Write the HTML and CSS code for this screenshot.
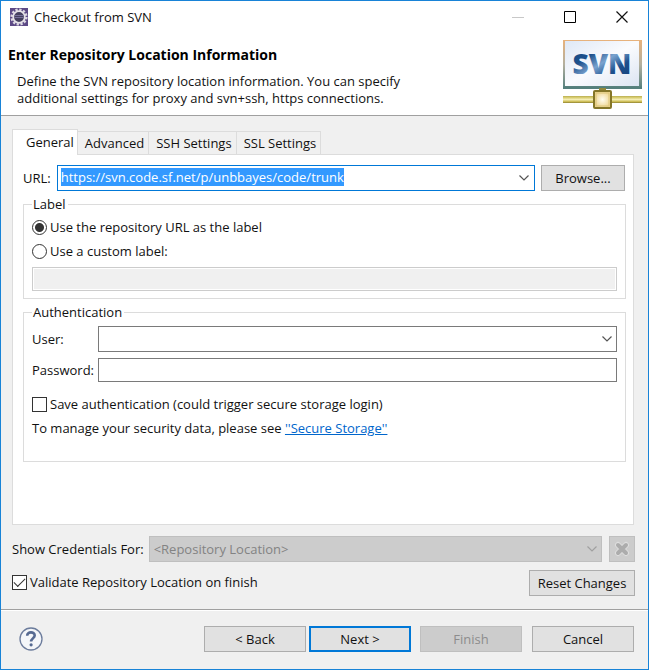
FILE: index.html
```html
<!DOCTYPE html>
<html lang="en">
<head>
<meta charset="utf-8">
<title>Checkout from SVN</title>
<link rel="stylesheet" href="styles.css">
</head>
<body>
<form class="window">
  <header class="titlebar">
    <svg class="app-icon" viewBox="0 0 18 18" aria-hidden="true">
      <rect width="18" height="18" fill="#5d4a86"/>
      <circle cx="9" cy="9" r="7.4" fill="none" stroke="#ddd9e2" stroke-width="2.400" stroke-dasharray="2.300 1.575"/>
      <circle cx="9" cy="9" r="5.800" fill="#45405f" stroke="#e6e2e8" stroke-width="1.800"/>
      <path d="M4.500 7.500h9M4.500 9.500h9" stroke="#77709a"/>
    </svg>
    <span class="titlebar-text">Checkout from SVN</span>
    <button type="button" class="caption" aria-label="Minimize" disabled><svg viewBox="0 0 12 12"><path d="M0 6.500h12" stroke="#c8c8c8"/></svg></button>
    <button type="button" class="caption" aria-label="Maximize"><svg viewBox="0 0 12 12"><path d="M.5.5h11v11H.5z" fill="none" stroke="#000"/></svg></button>
    <button type="button" class="caption" aria-label="Close"><svg viewBox="0 0 12 12"><path d="M.5.5l11 11M11.500.5l-11 11" stroke="#111" stroke-width="1.200"/></svg></button>
  </header>

  <section class="banner">
    <div class="banner-text">
      <h1>Enter Repository Location Information</h1>
      <p>Define the SVN repository location information. You can specify additional settings for proxy and svn+ssh, https connections.</p>
    </div>
    <svg class="banner-logo" viewBox="0 0 80 70" role="img" aria-label="SVN">
      <defs>
        <linearGradient id="frame" x1="0" y1="0" x2="0" y2="1"><stop offset="0" stop-color="#e8b27c"/><stop offset=".5" stop-color="#b3b0a0"/><stop offset="1" stop-color="#55807e"/></linearGradient>
        <linearGradient id="screen" x1="0" y1="0" x2="1" y2="1"><stop offset="0" stop-color="#dfe8f6"/><stop offset=".5" stop-color="#fafbfe"/><stop offset="1" stop-color="#dce4f2"/></linearGradient>
        <linearGradient id="ink" x1="0" y1="0" x2="1" y2="1"><stop offset="0" stop-color="#17467f"/><stop offset=".3" stop-color="#1e518d"/><stop offset=".5" stop-color="#7aa3cf"/><stop offset=".7" stop-color="#1d508d"/><stop offset="1" stop-color="#133f78"/></linearGradient>
        <linearGradient id="pipe" x1="0" y1="0" x2="0" y2="1"><stop offset="0" stop-color="#b8ad52"/><stop offset=".2" stop-color="#d6ca6c"/><stop offset=".5" stop-color="#f4edb4"/><stop offset=".8" stop-color="#cdbd55"/><stop offset="1" stop-color="#8c8030"/></linearGradient>
        <radialGradient id="node"><stop offset="0" stop-color="#fffdf0"/><stop offset="1" stop-color="#efd590"/></radialGradient>
      </defs>
      <rect x="1" y="0" width="79" height="49" fill="url(#frame)"/>
      <rect x="3" y="1" width="74" height="45" fill="url(#screen)"/>
      <path d="M1 47.500h79" stroke="#55807c" stroke-width="2"/>
      <text x="40" y="34" text-anchor="middle" class="logo-text" fill="url(#ink)">SVN</text>
      <rect x="37" y="48" width="7" height="3" fill="#92883b"/>
      <rect x="1" y="56" width="79" height="7" fill="url(#pipe)"/>
      <rect x="32" y="51" width="17" height="17" rx="1" fill="url(#node)" stroke="#857628" stroke-width="2"/>
      <rect x="34" y="53" width="13" height="13" fill="none" stroke="#dcc67a"/>
    </svg>
  </section>

  <main class="content">
    <div class="tabs" role="tablist">
      <button type="button" role="tab" class="tab tab-active" aria-selected="true">General</button>
      <button type="button" role="tab" class="tab">Advanced</button>
      <button type="button" role="tab" class="tab">SSH Settings</button>
      <button type="button" role="tab" class="tab">SSL Settings</button>
    </div>
    <section class="panel" role="tabpanel">
      <div class="url-row">
        <label for="url">URL:</label>
        <div class="combo">
          <input id="url" type="text" value="https://svn.code.sf.net/p/unbbayes/code/trunk" spellcheck="false">
          <button type="button" class="combo-arrow" aria-label="Recent locations"><svg class="chevron" viewBox="0 0 10 6"><path d="M.5.5L5 5 9.500.5"/></svg></button>
        </div>
        <button type="button" class="button button-browse">Browse...</button>
      </div>

      <fieldset>
        <legend>Label</legend>
        <label class="option"><input type="radio" name="label" checked>Use the repository URL as the label</label>
        <label class="option"><input type="radio" name="label">Use a custom label:</label>
        <input class="field field-custom" type="text" aria-label="Custom label" disabled>
      </fieldset>

      <fieldset class="authentication">
        <legend>Authentication</legend>
        <div class="credentials">
          <label for="user">User:</label>
          <div class="select-wrap">
            <select id="user"><option></option></select>
            <svg class="chevron" viewBox="0 0 10 6"><path d="M.5.5L5 5 9.500.5"/></svg>
          </div>
          <label for="password">Password:</label>
          <input class="field" id="password" type="password">
        </div>
        <label class="option"><input type="checkbox">Save authentication (could trigger secure storage login)</label>
        <p class="storage">To manage your security data, please see <a href="#">''Secure Storage''</a></p>
      </fieldset>
    </section>

    <div class="show-row">
      <label for="show">Show Credentials For:</label>
      <div class="select-wrap select-disabled">
        <select id="show" disabled><option>&lt;Repository Location&gt;</option></select>
        <svg class="chevron" viewBox="0 0 10 6"><path d="M.5.5L5 5 9.500.5"/></svg>
      </div>
      <button type="button" class="button button-delete" aria-label="Delete" disabled><svg viewBox="0 0 16 16"><path d="M4 4l8 8M12 4l-8 8" stroke="#dedede" stroke-width="6" stroke-linecap="round"/><path d="M4 4l8 8M12 4l-8 8" stroke="#acacac" stroke-width="4" stroke-linecap="round"/></svg></button>
    </div>
    <div class="validate-row">
      <label class="option"><input type="checkbox" checked>Validate Repository Location on finish</label>
      <button type="button" class="button button-reset">Reset Changes</button>
    </div>
  </main>

  <footer class="footer">
    <button type="button" class="help" aria-label="Help"><svg viewBox="0 0 24 24"><circle cx="12" cy="12" r="11" fill="#f4f6f9" stroke="#6c7c9c" stroke-width="1.300"/><path d="M8.200 8.800C8 4.300 15.800 4.300 15.700 8.400C15.600 11.300 12.100 11.500 12.100 14.500" fill="none" stroke="#566a92" stroke-width="2.600"/><circle cx="12.100" cy="17.800" r="1.600" fill="#566a92"/></svg></button>
    <button type="button" class="button">&lt; Back</button>
    <button type="button" class="button button-default">Next &gt;</button>
    <button type="button" class="button button-finish" disabled>Finish</button>
    <button type="button" class="button">Cancel</button>
  </footer>
</form>
<script src="script.js"></script>
</body>
</html>
```
FILE: styles.css
```css
* { box-sizing: border-box; }

body, h1, p { margin: 0; }

body, button, input, select {
  font: 13px/18px "Open Sans", "Noto Sans", sans-serif;
  color: #111;
}

button, input, select { margin: 0; padding: 0; border-radius: 0; outline: 0; }

label, legend, button { white-space: nowrap; }

svg { display: block; }

.window {
  display: flex;
  flex-direction: column;
  min-height: 100vh;
  border: 1px solid #1883d7;
  background: #f0f0f0;
}

.titlebar {
  display: flex;
  align-items: center;
  height: 32px;
  padding-left: 9px;
  background: #fff;
}

.app-icon { width: 18px; height: 18px; margin-right: 6px; }
.titlebar-text { flex: 1; }

.caption {
  display: grid;
  place-items: center;
  width: 52px;
  height: 32px;
  border: 0;
  background: none;
}

.caption svg { width: 12px; height: 12px; }

.banner {
  display: flex;
  justify-content: space-between;
  padding: 7px 6px 5px 7px;
  border-bottom: 1px solid #a0a0a0;
  background: #fff;
}

.banner-text { padding-top: 5px; }

h1 { font-size: 14px; line-height: 20px; font-weight: 700; color: #000; }

.banner p { width: 400px; margin-top: 8px; padding-left: 9px; line-height: 17px; }

.banner-logo { width: 80px; height: 70px; }
.logo-text { font: 800 28px "Open Sans", sans-serif; }

.content {
  flex: 1;
  display: flex;
  flex-direction: column;
  padding: 13px 13px 13px 11px;
}

.tabs { display: flex; align-items: flex-end; height: 25px; }

.tab {
  height: 23px;
  padding: 0 4px 0 7px;
  border: 1px solid #dcdcdc;
  border-width: 1px 1px 0 0;
  background: #f0f0f0;
}

.tab-active {
  position: relative;
  height: 26px;
  margin-bottom: -1px;
  padding: 0 3px 2px 13px;
  border-left-width: 1px;
  background: #fff;
}

.panel {
  flex: 1;
  margin-right: 1px;
  padding: 10px 7px 10px 10px;
  border: 1px solid #dcdcdc;
  background: #fff;
}

.url-row { display: flex; align-items: center; gap: 6px; margin-right: 1px; }

.combo {
  flex: 1;
  display: flex;
  height: 26px;
  border: 1px solid #0078d7;
}

.combo input {
  flex: 1;
  min-width: 0;
  padding: 0 3px 2px;
  border: 0;
  background: #fff;
  caret-color: #d2691e;
}

.combo input::selection { background: #3399ff; color: #fff; }

.combo-arrow { display: grid; place-items: center; width: 20px; border: 0; background: none; }

.chevron { width: 10px; height: 6px; fill: none; stroke: #555; stroke-width: 1.2; }

.button {
  width: 102px;
  height: 26px;
  border: 1px solid #adadad;
  background: #e1e1e1;
}

.button:disabled { border-color: #bfbfbf; background: #ccc; color: #8c8c8c; }
.button-browse { width: 84px; }
.button-reset { width: 106px; }
.button-default { border: 2px solid #0078d7; }

fieldset {
  min-width: 0;
  margin: 4px 0 0;
  padding: 2px 8px 7px;
  border: 1px solid #dcdcdc;
}

.authentication { padding-bottom: 21px; }

legend { padding: 0 2px 0 1px; }

.option { display: flex; align-items: center; gap: 3px; height: 24px; }

.option input {
  appearance: none;
  width: 15px;
  height: 15px;
  border: 1px solid #333;
  background: #fff;
}

.option input[type="radio"] { border-radius: 50%; }
.option input[type="radio"]:checked { background: radial-gradient(circle, #333 4px, #fff 5px); }

.option input[type="checkbox"]:checked {
  display: grid;
  place-items: center;
}

.option input[type="checkbox"]:checked::before {
  content: "";
  width: 10px;
  height: 5px;
  border: solid #333;
  border-width: 0 0 1px 1px;
  transform: translateY(-1px) rotate(-45deg);
}

.field { width: 100%; height: 24px; border: 1px solid #7a7a7a; background: #fff; }

.field-custom {
  display: block;
  margin-top: 4px;
  border-color: #ccc;
  background: #f0f0f0;
  box-shadow: inset 0 0 0 1px #fff;
}

.credentials {
  display: grid;
  grid-template-columns: auto 1fr;
  gap: 6px 4px;
  align-items: center;
  margin: 3px 0 10px;
}

.select-wrap { display: grid; align-items: center; }
.select-wrap > * { grid-area: 1 / 1; }

.select-wrap select {
  appearance: none;
  width: 100%;
  height: 26px;
  padding: 0 24px 0 4px;
  border: 1px solid #7a7a7a;
  background: #fff;
}

.select-wrap .chevron { justify-self: end; margin-right: 5px; pointer-events: none; }
.select-disabled select { border-color: #bfbfbf; background: #ccc; color: #838383; opacity: 1; }
.select-disabled .chevron { stroke: #a0a0a0; }

.storage { line-height: 24px; }

a { color: #0066cc; }

.show-row { display: flex; align-items: center; gap: 5px; margin-top: 11px; }
.show-row .select-wrap { flex: 1; }
.show-row .button-delete { display: grid; place-items: center; width: 26px; margin-left: 2px; }
.button-delete svg { width: 16px; height: 16px; }

.validate-row { display: flex; justify-content: space-between; margin-top: 8px; }

.footer {
  display: flex;
  align-items: center;
  height: 60px;
  padding: 0 14px 2px 0;
  border-top: 1px solid #a0a0a0;
  box-shadow: inset 0 1px #fff;
}

.help { width: 24px; height: 24px; margin: 0 auto 0 18px; border: 0; background: none; }
.button-default { margin: 0 9px 0 3px; }
.button-finish { margin-right: 10px; }
```
FILE: script.js
```js
const url = document.getElementById("url");
url.focus();
url.select();
```
